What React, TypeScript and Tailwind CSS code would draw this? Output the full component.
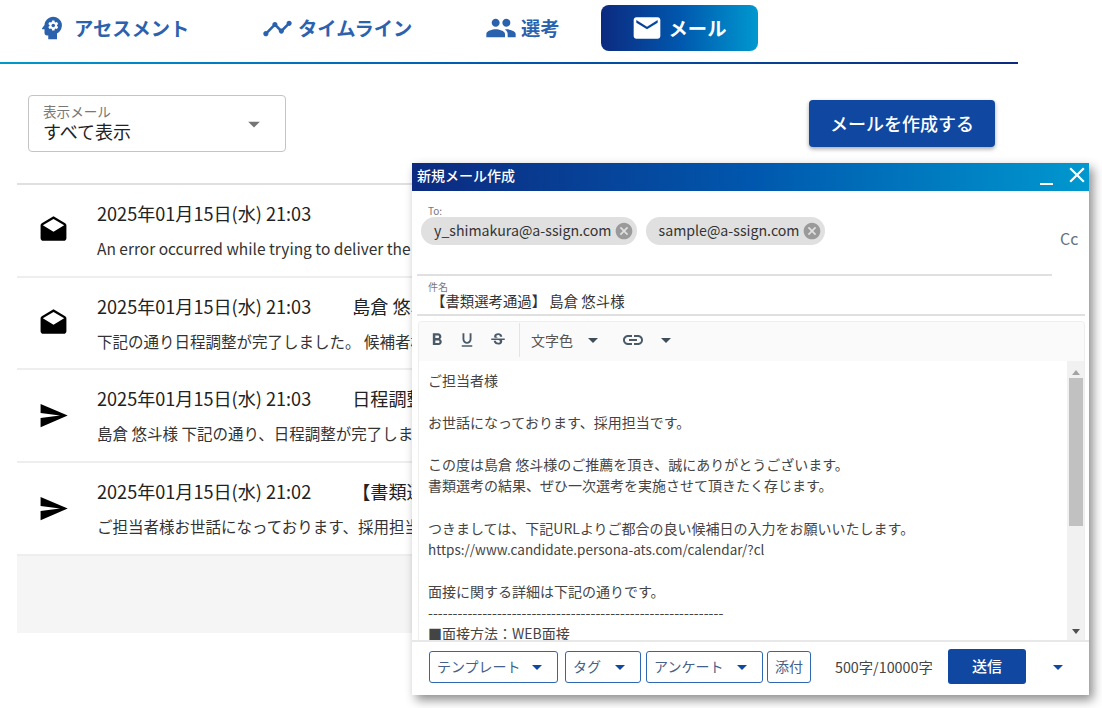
import React from 'react';
import {
  MdPsychology,
  MdTimeline,
  MdPeople,
  MdEmail,
  MdDrafts,
  MdSend,
  MdFormatBold,
  MdFormatUnderlined,
  MdStrikethroughS,
  MdLink,
  MdArrowDropDown,
  MdCancel,
  MdClose,
} from 'react-icons/md';

const rows = [
  { icon: 'open', date: '2025年01月15日(水) 21:03', subject: '', body: 'An error occurred while trying to deliver the mail' },
  { icon: 'open', date: '2025年01月15日(水) 21:03', subject: '島倉 悠斗様', body: '下記の通り日程調整が完了しました。 候補者様' },
  { icon: 'send', date: '2025年01月15日(水) 21:03', subject: '日程調整完了', body: '島倉 悠斗様 下記の通り、日程調整が完了しました。' },
  { icon: 'send', date: '2025年01月15日(水) 21:02', subject: '【書類選考通過】', body: 'ご担当者様お世話になっております、採用担当です。' },
];

const bodyLines = [
  { text: 'ご担当者様', size: 'text-[14px]' },
  { text: '', size: 'text-[14px]' },
  { text: 'お世話になっております、採用担当です。', size: 'text-[14px]' },
  { text: '', size: 'text-[14px]' },
  { text: 'この度は島倉 悠斗様のご推薦を頂き、誠にありがとうございます。', size: 'text-[14px]' },
  { text: '書類選考の結果、ぜひ一次選考を実施させて頂きたく存じます。', size: 'text-[14px]' },
  { text: '', size: 'text-[14px]' },
  { text: 'つきましては、下記URLよりご都合の良い候補日の入力をお願いいたします。', size: 'text-[14px]' },
  { text: 'https://www.candidate.persona-ats.com/calendar/?cl', size: 'text-[13.5px]' },
  { text: '', size: 'text-[14px]' },
  { text: '面接に関する詳細は下記の通りです。', size: 'text-[14px]' },
  { text: '------------------------------------------------------------', size: 'text-[14.2px]' },
  { text: '■面接方法：WEB面接', size: 'text-[14px]' },
];

const Tab: React.FC<{ icon: React.ReactNode; label: string; className: string }> = ({ icon, label, className }) => (
  <div className={`flex items-center text-[19.3px] font-bold text-[#2b62ae] ${className}`}>
    {icon}
    <span className="pt-[1px]">{label}</span>
  </div>
);

const Chip: React.FC<{ label: string }> = ({ label }) => (
  <div className="flex h-7 items-center rounded-full bg-[#e0e0e0] pl-[13px] pr-[3px] text-[14.2px] text-[#333333]">
    <span className="-mt-[1px]">{label}</span>
    <MdCancel className="ml-[2px] text-[#9a9a9a]" size={20} />
  </div>
);

const FooterButton: React.FC<{ label: string; width: string; hasArrow?: boolean }> = ({ label, width, hasArrow = true }) => (
  <div className={`flex h-8 items-center justify-between rounded-[3px] border border-[#2f67b2] pl-[7px] pr-[8px] text-[14px] text-[#44618a] ${width}`}>
    <span>{label}</span>
    {hasArrow && <MdArrowDropDown className="text-[#0f47a1]" size={24} />}
  </div>
);

export default function App() {
  return (
    <div className="relative h-[708px] w-[1102px] overflow-hidden bg-white font-['Noto_Sans_CJK_JP','Noto_Sans',sans-serif]">
      <div className="h-[64px] w-[1018px] pt-[5px]">
        <div className="flex h-[46px] items-center">
          <Tab className="ml-[37px] w-[225px]" icon={<MdPsychology className="mr-[7px]" size={30} />} label="アセスメント" />
          <Tab className="w-[223px]" icon={<MdTimeline className="mr-[5px]" size={31} />} label="タイムライン" />
          <Tab className="w-[116px]" icon={<MdPeople className="mr-[4px]" size={32} />} label="選考" />
          <div className="flex h-[46px] w-[157px] items-center justify-center rounded-lg bg-gradient-to-r from-[#0b2a80] via-[#0057ad] to-[#0098cf] pr-[2px] text-[19.3px] font-bold text-white">
            <MdEmail className="mr-[6px]" size={32} />
            <span>メール</span>
          </div>
        </div>
        <div className="mt-[11px] h-[2px] bg-gradient-to-r from-[#0098cf] via-[#0057ad] to-[#0b2a80]" />
      </div>

      <div className="flex h-[119px] items-start justify-between pl-[28px] pr-[107px] pt-[31px]">
        <div className="flex h-[57px] w-[258px] items-center justify-between rounded-[4px] border border-[#c4c4c4] pl-[14px] pr-[17px]">
          <div className="flex flex-col">
            <span className="text-[13.6px] leading-[15px] text-[#777777]">表示メール</span>
            <span className="text-[18px] leading-[24px] text-[#222222]">すべて表示</span>
          </div>
          <MdArrowDropDown className="text-[#757575]" size={28} />
        </div>
        <div className="mt-[5px] flex h-[47px] w-[186px] items-center justify-center rounded-[4px] bg-[#0f47a1] text-[18px] font-medium text-white shadow-[0_2px_4px_rgba(0,0,0,0.35)]">
          メールを作成する
        </div>
      </div>

      <div className="ml-[17px] w-[1001px] border-t-2 border-[#e0e0e0]">
        {rows.map((row, i) => (
          <div key={i} className="flex h-[92.7px] items-center border-b-2 border-[#eeeeee]">
            <div className="flex w-[72px] shrink-0 justify-center">
              {row.icon === 'open' ? <MdDrafts className="text-black" size={31} /> : <MdSend className="text-black" size={31} />}
            </div>
            <div className="ml-[8px] min-w-0 whitespace-nowrap">
              <div className="-mt-[1px] flex text-[18.1px] leading-[24px] text-[#222222]">
                <span>{row.date}</span>
                {row.subject && <span className="ml-[41px]">{row.subject}</span>}
              </div>
              <div className="mt-[12px] text-[15.5px] leading-[22px] text-[#333333]">{row.body}</div>
            </div>
          </div>
        ))}
        <div className="h-[77px] bg-[#f5f5f5]" />
      </div>

      <div className="absolute left-[412px] top-[163px] flex h-[532px] w-[677px] flex-col bg-white shadow-[4px_5px_10px_rgba(0,0,0,0.45)]">
        <div className="flex h-[28px] shrink-0 items-start justify-between bg-gradient-to-r from-[#0b2a80] via-[#0057ad] to-[#0098cf] pl-[5px] text-[14px] font-medium leading-[25px] text-white">
          <span>新規メール作成</span>
          <div className="flex items-start">
            <div className="mr-[11px] mt-[20px] h-[2px] w-[13px] bg-white" />
            <MdClose className="-mt-[1px] mr-[-1px]" size={26} />
          </div>
        </div>

        <div className="relative mx-[5px] h-[85px] w-[635px] shrink-0 border-b-2 border-[#e0e0e0] pl-[4px]">
          <div className="pl-[7px] pt-[14px] text-[10px] leading-[12px] text-[#777777]">To:</div>
          <div className="flex gap-[9px]">
            <Chip label="y_shimakura@a-ssign.com" />
            <Chip label="sample@a-ssign.com" />
          </div>
          <span className="absolute left-[643px] top-[36px] text-[16px] leading-[22px] text-[#667280]">Cc</span>
        </div>

        <div className="mx-[5px] h-[40px] w-[668px] shrink-0 border-b-2 border-[#e0e0e0] pl-[11px]">
          <div className="pt-[4px] text-[10px] leading-[13px] text-[#777777]">件名</div>
          <div className="-mt-[2px] pl-[3px] text-[14.4px] leading-[19px] text-[#333333]">【書類選考通過】 島倉 悠斗様</div>
        </div>

        <div className="mx-[6px] mt-[5px] flex min-h-0 w-[667px] flex-1 flex-col overflow-hidden rounded-t-[4px] border-x border-t border-[#eeeeee]">
          <div className="flex h-[39px] shrink-0 items-center bg-[#fafafa] pb-[3px] pl-[8px] text-[#4a5a68]">
            <MdFormatBold size={20} />
            <MdFormatUnderlined className="ml-[11px]" size={18} />
            <MdStrikethroughS className="ml-[13px]" size={18} />
            <div className="ml-[12px] h-[34px] w-px bg-[#e4e4e4]" />
            <span className="ml-[11px] text-[14px] text-[#555555]">文字色</span>
            <MdArrowDropDown className="ml-[8px] text-[#3f4d5a]" size={24} />
            <MdLink className="ml-[16px]" size={24} />
            <MdArrowDropDown className="ml-[9px] text-[#3f4d5a]" size={24} />
          </div>
          <div className="flex min-h-0 flex-1">
            <div className="min-w-0 flex-1 overflow-hidden whitespace-nowrap pl-[9px] pt-[9px] leading-[21.1px] text-[#444444]">
              {bodyLines.map((line, i) => (
                <div key={i} className={`h-[21.1px] ${line.size}`}>{line.text}</div>
              ))}
            </div>
            <div className="flex w-[17px] shrink-0 flex-col items-center bg-[#f1f1f1]">
              <div className="mt-[9px] h-0 w-0 border-x-[4px] border-b-[5px] border-x-transparent border-b-[#a3a3a3]" />
              <div className="mt-[3px] h-[148px] w-[14px] bg-[#c1c1c1]" />
              <div className="mt-auto mb-[6px] h-0 w-0 border-x-[4px] border-t-[5px] border-x-transparent border-t-[#505050]" />
            </div>
          </div>
        </div>

        <div className="flex h-[55px] shrink-0 items-center border-t-2 border-[#e8e8e8] pb-[4px] pl-[17px]">
          <FooterButton label="テンプレート" width="w-[129px]" />
          <div className="w-[7px]" />
          <FooterButton label="タグ" width="w-[76px]" />
          <div className="w-[5px]" />
          <FooterButton label="アンケート" width="w-[117px]" />
          <div className="w-[4px]" />
          <div className="flex h-8 w-[44px] items-center justify-center rounded-[3px] border border-[#2f67b2] text-[14px] text-[#44618a]">添付</div>
          <span className="ml-[24px] w-[113px] text-[14.3px] text-[#444444]">500字/10000字</span>
          <div className="flex h-[35px] w-[78px] items-center justify-center rounded-[3px] bg-[#0f47a1] text-[15px] font-medium text-white">送信</div>
          <MdArrowDropDown className="ml-[20px] text-[#0f47a1]" size={24} />
        </div>
      </div>
    </div>
  );
}
